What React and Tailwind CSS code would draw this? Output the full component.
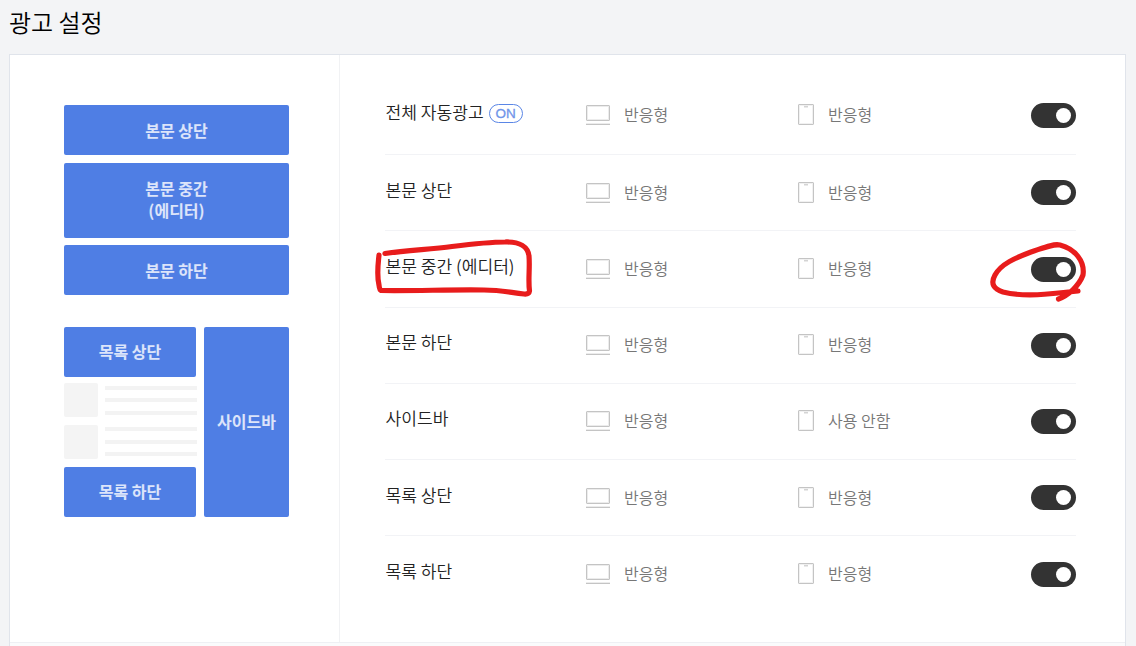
const rows = [
  { name: "전체 자동광고", badge: "ON", pc: "반응형", mobile: "반응형" },
  { name: "본문 상단", pc: "반응형", mobile: "반응형" },
  { name: "본문 중간 (에디터)", pc: "반응형", mobile: "반응형" },
  { name: "본문 하단", pc: "반응형", mobile: "반응형" },
  { name: "사이드바", pc: "반응형", mobile: "사용 안함" },
  { name: "목록 상단", pc: "반응형", mobile: "반응형" },
  { name: "목록 하단", pc: "반응형", mobile: "반응형" },
];

function AdBlock({ className, children }) {
  return (
    <div
      className={`flex items-center justify-center rounded-xs bg-[#4f7ee4] text-center text-base leading-[22px] font-bold text-white/80 ${className}`}
    >
      <span>{children}</span>
    </div>
  );
}

// Placeholder for one post in the list: thumbnail and three text lines
function PostSkeleton() {
  return (
    <div className="flex h-[34px] gap-[7px]">
      <div className="w-[34px] shrink-0 rounded-xs bg-[#f4f4f4]" />
      <div className="flex w-[92px] shrink-0 flex-col justify-between pt-[2.5px] pb-[2.5px]">
        <div className="h-1 bg-[#f3f3f3]" />
        <div className="h-1 bg-[#f3f3f3]" />
        <div className="h-1 bg-[#f3f3f3]" />
      </div>
    </div>
  );
}

function Preview() {
  return (
    <div className="w-[330px] shrink-0 border-r border-[#f1f2f4] pt-[50px] pl-[54px]">
      <div className="w-[225px]">
        <AdBlock className="h-[50px] pb-px">본문 상단</AdBlock>
        <AdBlock className="mt-2 h-[75px] pb-[3px]">
          본문 중간
          <br />
          (에디터)
        </AdBlock>
        <AdBlock className="mt-[7px] h-[50px] pb-px">본문 하단</AdBlock>
        <div className="mt-8 flex gap-2">
          <div className="w-[132px]">
            <AdBlock className="h-[50px] pb-0.5">목록 상단</AdBlock>
            <div className="flex h-[90px] flex-col gap-[7.5px] pt-[6px]">
              <PostSkeleton />
              <PostSkeleton />
            </div>
            <AdBlock className="h-[50px] pb-0.5">목록 하단</AdBlock>
          </div>
          <AdBlock className="h-[190px] w-[85px] pb-0.5">사이드바</AdBlock>
        </div>
      </div>
    </div>
  );
}

function PcIcon() {
  return (
    <svg width="24" height="20" viewBox="0 0 24 20" fill="none">
      <rect x="0.5" y="0.5" width="23" height="15" rx="0.5" stroke="#c4c4c4" />
      <rect x="1.5" y="1.5" width="21" height="13" stroke="#ececec" />
      <path d="M0 18.5h24" stroke="#ececec" />
      <path d="M0 19.5h24" stroke="#c4c4c4" />
    </svg>
  );
}

function MobileIcon() {
  return (
    <svg width="16" height="21" viewBox="0 0 16 21" fill="none">
      <rect x="0.5" y="0.5" width="15" height="20" rx="0.5" stroke="#c4c4c4" />
      <rect x="1.5" y="1.5" width="13" height="18" stroke="#f1f1f1" />
      <path d="M6 2.7h4" stroke="#d4d4d4" strokeWidth="1.6" />
    </svg>
  );
}

function Toggle() {
  return (
    <button
      type="button"
      role="switch"
      aria-checked="true"
      className="flex h-[25px] w-[45px] items-center justify-end rounded-full bg-[#333] pr-[5px]"
    >
      <span className="size-[15px] rounded-full bg-white" />
    </button>
  );
}

function SettingRow({ row, first, last }) {
  return (
    <div
      className={`flex border-[#f2f3f6] ${first ? "h-[78px]" : "h-[76.25px]"} ${
        last ? "" : "border-b"
      }`}
    >
      <div className="flex w-[201px] items-start pt-[22.5px] pl-[0.5px] text-[17.1px] leading-6 text-[#222]">
        {row.name}
        {row.badge && (
          <span className="mt-[4.5px] ml-[5px] flex h-[19px] w-[34px] items-center justify-center rounded-full border border-[#5a86e6] font-['Liberation_Sans',sans-serif] text-[13.5px] leading-none text-[#6f94e9] [-webkit-text-stroke:0.3px_#6f94e9]">
            {row.badge}
          </span>
        )}
      </div>
      <div className="flex w-[212px] items-start pt-[27.7px] text-base leading-6 text-[#777]">
        <PcIcon />
        <span className="-mt-[3px] ml-[14px]">{row.pc}</span>
      </div>
      <div className="flex grow items-start pt-[26.7px] text-base leading-6 text-[#777]">
        <MobileIcon />
        <span className="-mt-[2px] ml-[14px]">{row.mobile}</span>
      </div>
      <div className={first ? "pt-[26px]" : "pt-[25.4px]"}>
        <Toggle />
      </div>
    </div>
  );
}

// Red pen marks around the editor row and its switch
function PenMarks() {
  return (
    <svg
      className="pointer-events-none absolute top-0 left-0"
      width="1136"
      height="646"
      fill="none"
      stroke="#e81c1c"
      strokeWidth="5.2"
      strokeLinecap="round"
      strokeLinejoin="round"
    >
      <path d="M385 253.5C408 250 430 249.500 452 246.500C472 244 489 242 505 242C520 241.500 528 247 529 256C530 268 528 280 529.500 291Q529 294.500 524 294C510 292.500 502 290 484 290C450 289.500 415 291 381 290.500Q379.500 290 379 285C376.500 275 378 265 379 255" />
      <path d="M1058.500 299C1068 295.500 1079 286 1083 275C1085 261 1075 249 1060 245C1053 243.500 1043 248 1031 252C1015 258 1001 264 995 275C990 284 994 289 1003 292C1024 297.500 1052 294 1078 291" />
    </svg>
  );
}

export default function App() {
  return (
    <div className="relative h-[646px] w-[1136px] overflow-hidden bg-[#f3f4f6] font-['Noto_Sans_CJK_KR','Noto_Sans',sans-serif] font-[350]">
      <h1 className="h-[54px] pt-[4px] pl-[9px] text-2xl leading-9 font-[350] text-black">
        광고 설정
      </h1>
      <div className="ml-[9px] h-[600px] w-[1117px] border border-[#e0e4eb] bg-[#fafbfc]">
        <div className="flex h-[588px] border-b border-[#eef0f4] bg-white">
          <Preview />
          <div className="w-[736px] pt-[22px] pl-[45px]">
            {rows.map((row, i) => (
              <SettingRow
                key={row.name}
                row={row}
                first={i === 0}
                last={i === rows.length - 1}
              />
            ))}
          </div>
        </div>
      </div>
      <PenMarks />
    </div>
  );
}
